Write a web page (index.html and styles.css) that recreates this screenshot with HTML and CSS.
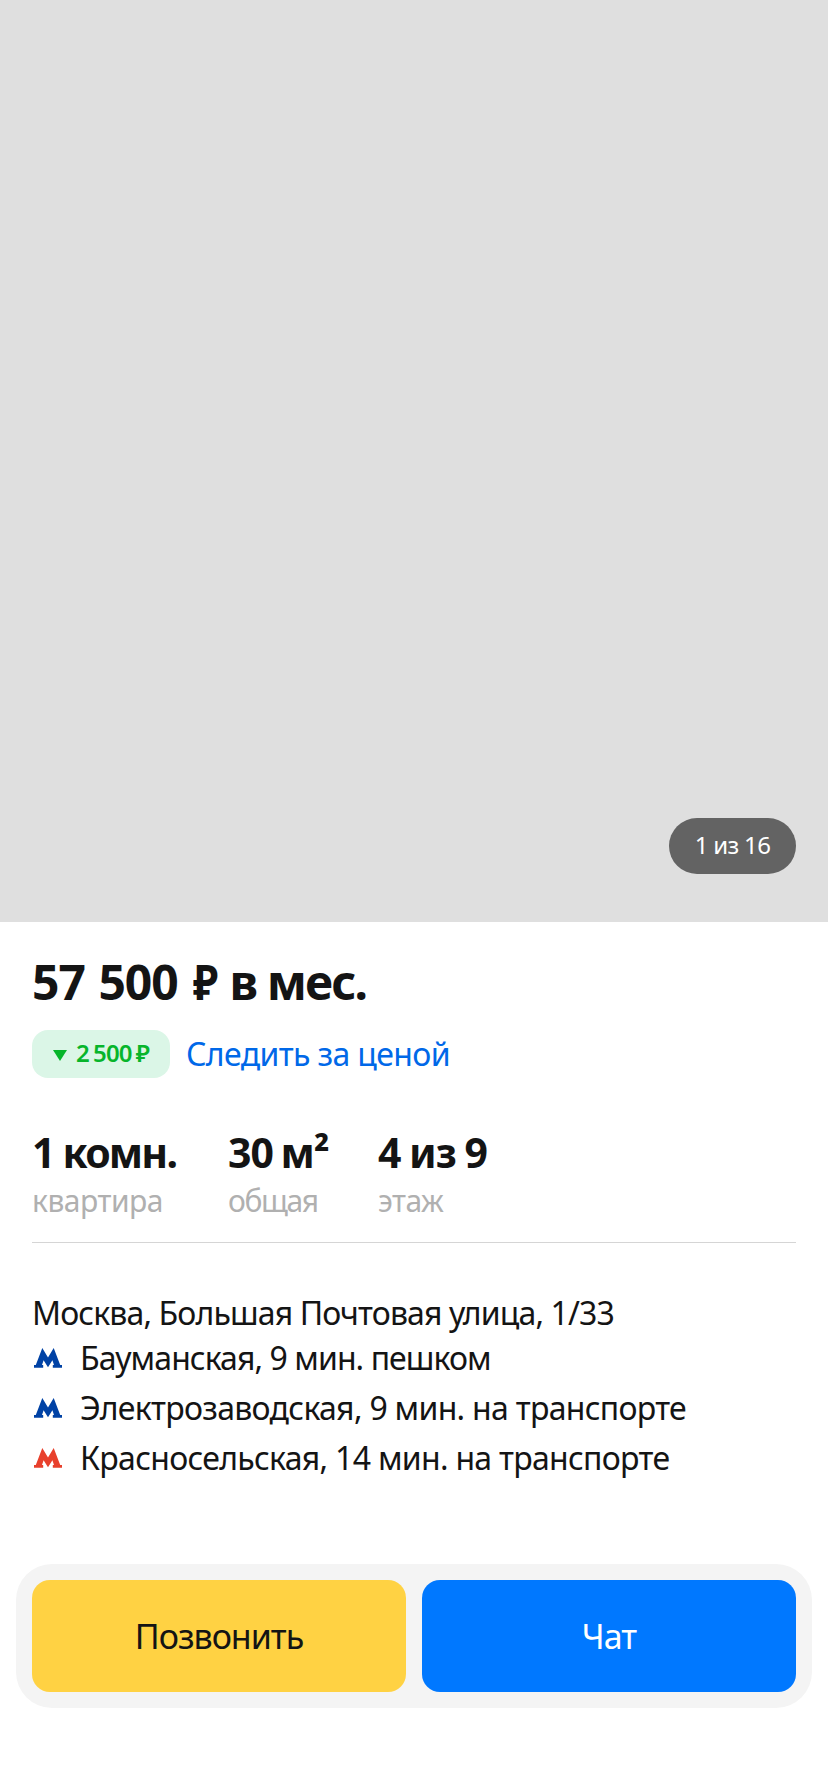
FILE: index.html
```html
<!DOCTYPE html>
<html lang="ru">
<head>
<meta charset="utf-8">
<meta name="viewport" content="width=device-width, initial-scale=1">
<title>57 500 ₽ в мес.</title>
<link rel="stylesheet" href="styles.css">
</head>
<body>
<svg class="defs" width="0" height="0">
  <symbol id="metro" viewBox="0 0 28 20">
    <path d="M8.3 0 14 9.6 19.7 0 26.2 17.1H28V19.7H18.8V17.1H20L18.4 12.2 14 19.3 9.6 12.2 8 17.1H9.2V19.7H0V17.1H1.8Z"/>
  </symbol>
</svg>
<main class="page">
  <div class="gallery"><span class="counter">1 из 16</span></div>
  <section class="info">
    <h1 class="price"><span class="amount">57 500</span> <span class="currency">₽</span> <span class="period">в мес.</span></h1>
    <div class="price-row">
      <span class="drop">
        <svg class="drop-icon" viewBox="0 0 14 11"><path d="M0 0H14L7 11Z"/></svg>
        <span class="drop-text">2 500 ₽</span>
      </span>
      <a class="follow">Следить за ценой</a>
    </div>
    <div class="stats">
      <div class="stat rooms"><b>1 комн.</b><span>квартира</span></div>
      <div class="stat area"><b>30 м²</b><span>общая</span></div>
      <div class="stat floor"><b>4 из 9</b><span>этаж</span></div>
    </div>
    <div class="address"><span>Москва, Большая Почтовая улица, 1/33</span></div>
    <ul class="metros">
      <li class="metro"><svg class="blue"><use href="#metro"/></svg><span class="near">Бауманская, 9 мин. пешком</span></li>
      <li class="metro"><svg class="blue"><use href="#metro"/></svg><span>Электрозаводская, 9 мин. на транспорте</span></li>
      <li class="metro"><svg class="red"><use href="#metro"/></svg><span>Красносельская, 14 мин. на транспорте</span></li>
    </ul>
  </section>
  <div class="actions">
    <button class="btn call">Позвонить</button>
    <button class="btn chat">Чат</button>
  </div>
</main>
</body>
</html>
```
FILE: styles.css
```css
* { box-sizing: border-box; margin: 0; padding: 0; }
body { background: #fff; color: #141414; font-family: "Noto Sans", sans-serif; }
.defs { display: block; }
.page { width: 828px; height: 1792px; overflow: hidden; }
.gallery { height: 922px; background: #dfdfdf; display: flex; justify-content: flex-end; align-items: flex-end; padding: 0 32px 48px; }
.counter { width: 127px; height: 56px; border-radius: 28px; background: #636363; color: #fff; font-size: 24px; line-height: 53px; text-align: center; letter-spacing: -0.7px; }
.info { padding: 0 32px; height: 642px; white-space: nowrap; }
.price { padding-top: 30px; font-size: 48px; line-height: 60px; height: 108px; font-weight: 700; }
.amount { letter-spacing: -1px; word-spacing: 2px; }
.currency { display: inline-block; margin-left: 3px; transform: scaleX(0.87); transform-origin: left; }
.period { margin-left: -5px; letter-spacing: -1.9px; }
.price-row { display: flex; gap: 16px; height: 48px; }
.drop { width: 138px; height: 48px; border-radius: 16px; background: #dbf6e7; color: #07b52b; display: flex; align-items: center; padding-left: 21px; gap: 9px; font-size: 24px; font-weight: 600; line-height: 46px; letter-spacing: -0.8px; word-spacing: -1.4px; }
.drop-icon { width: 14px; height: 11px; fill: currentColor; flex: none; margin-top: 2px; }
.drop-text { margin-top: -2px; }
.follow { color: #0068e8; font-size: 32px; line-height: 47px; letter-spacing: -0.63px; }
.stats { display: flex; margin-top: 48px; height: 117px; border-bottom: 1px solid #d5d5d5; }
.stat { display: flex; flex-direction: column; }
.stat b { font-size: 41px; line-height: 53px; letter-spacing: -1px; word-spacing: -1px; }
.stat span { font-size: 30px; line-height: 43px; color: #b0b0b0; letter-spacing: -0.5px; }
.rooms { width: 196px; }
.rooms b { letter-spacing: -1.8px; word-spacing: 0; }
.area { width: 150px; }
.area b { word-spacing: -2px; }
.area span { letter-spacing: -1.4px; }
.address { padding-top: 48px; height: 91px; font-size: 32px; line-height: 44px; letter-spacing: -0.87px; }
.metros { list-style: none; }
.metro { display: flex; align-items: flex-start; height: 50px; font-size: 32px; line-height: 48px; letter-spacing: -0.7px; }
.near { letter-spacing: -0.93px; }
.metro svg { width: 28px; height: 20px; margin: 14px 18px 0 2px; }
.blue { fill: #0042a5; }
.red { fill: #e8402c; }
.actions { margin: 0 16px; height: 144px; padding: 16px; border-radius: 36px; background: #f4f4f4; display: flex; gap: 16px; }
.btn { flex: 1; border: 0; border-radius: 18px; font: 34px/110px "Noto Sans", sans-serif; letter-spacing: -1px; }
.call { background: #ffd243; color: #141414; }
.chat { background: #0078ff; color: #fff; }
```
